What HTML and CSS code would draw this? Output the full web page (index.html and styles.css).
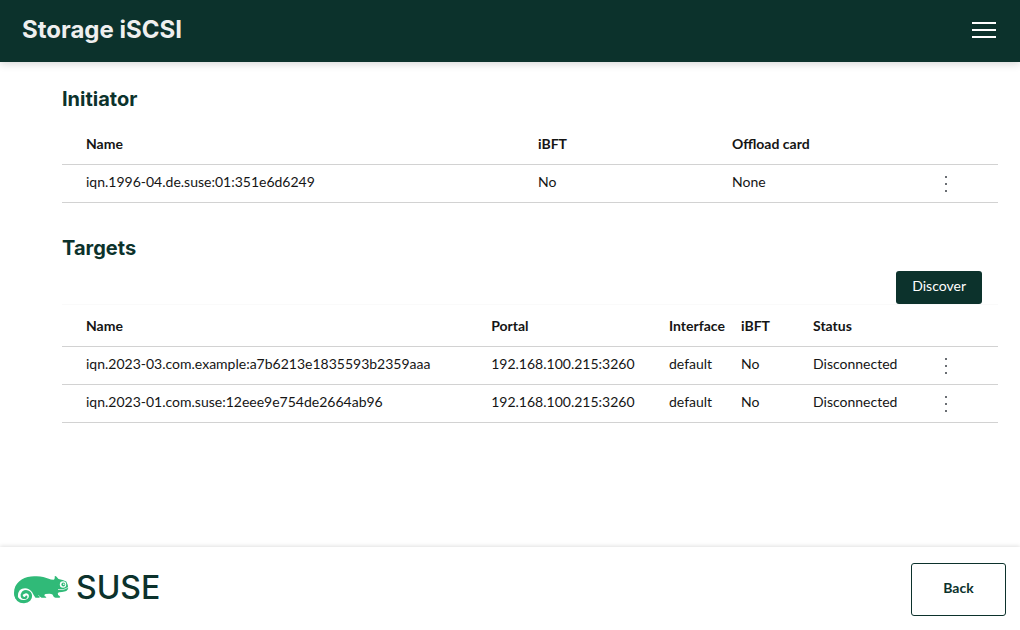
FILE: index.html
```html
<!DOCTYPE html>
<html lang="en">
<head>
<meta charset="utf-8">
<meta name="viewport" content="width=device-width, initial-scale=1">
<title>Storage iSCSI</title>
<link rel="stylesheet" href="styles.css">
</head>
<body class="page">
<header class="header">
  <h1 class="header-title">Storage iSCSI</h1>
  <button class="menu-button" type="button" aria-label="Menu">
    <svg width="24" height="24" viewBox="0 0 24 24" aria-hidden="true"><path fill="currentColor" d="M0 4h24v2H0zM0 11h24v2H0zM0 18h24v2H0z"/></svg>
  </button>
</header>
<main class="main">
  <section class="section">
    <h2 class="section-title">Initiator</h2>
    <table class="table initiator">
      <thead>
        <tr><th class="name">Name</th><th class="ibft">iBFT</th><th>Offload card</th><td class="actions"></td></tr>
      </thead>
      <tbody>
        <tr><td>iqn.1996-04.de.suse:01:351e6d6249</td><td>No</td><td>None</td><td class="actions"><button class="kebab" type="button" aria-label="Actions"><svg width="2" height="16" viewBox="0 0 2 16" aria-hidden="true"><path fill="currentColor" d="M0 0h2v2H0zM0 7h2v2H0zM0 14h2v2H0z"/></svg></button></td></tr>
      </tbody>
    </table>
  </section>
  <section class="section">
    <h2 class="section-title">Targets</h2>
    <div class="toolbar"><button class="discover" type="button">Discover</button></div>
    <table class="table targets">
      <thead>
        <tr><th class="name">Name</th><th class="portal">Portal</th><th class="narrow">Interface</th><th class="narrow">iBFT</th><th>Status</th><td class="actions"></td></tr>
      </thead>
      <tbody>
        <tr><td>iqn.2023-03.com.example:a7b6213e1835593b2359aaa</td><td>192.168.100.215:3260</td><td>default</td><td>No</td><td>Disconnected</td><td class="actions"><button class="kebab" type="button" aria-label="Actions"><svg width="2" height="16" viewBox="0 0 2 16" aria-hidden="true"><path fill="currentColor" d="M0 0h2v2H0zM0 7h2v2H0zM0 14h2v2H0z"/></svg></button></td></tr>
        <tr><td>iqn.2023-01.com.suse:12eee9e754de2664ab96</td><td>192.168.100.215:3260</td><td>default</td><td>No</td><td>Disconnected</td><td class="actions"><button class="kebab" type="button" aria-label="Actions"><svg width="2" height="16" viewBox="0 0 2 16" aria-hidden="true"><path fill="currentColor" d="M0 0h2v2H0zM0 7h2v2H0zM0 14h2v2H0z"/></svg></button></td></tr>
      </tbody>
    </table>
  </section>
</main>
<footer class="footer">
  <div class="brand">
    <svg class="brand-mark" width="56" height="32" viewBox="0 0 56 32" aria-hidden="true">
      <path fill="#30ba78" d="M0 19C0 9 8 3.500 17 2.500C26 1.500 30 2.800 34 4.500Q37 5.800 39.500 5.800Q41 5.500 40.700 2.300Q41.300 1.400 42.300 2.600L44.500 5Q49 5.600 52.300 7.500Q54.300 11 54.200 14.500Q53.500 17.500 48 18Q44.500 18.200 43.800 19Q43.500 21.500 45.500 21.900Q47 22.800 45.500 23.800H41.500Q39.500 23.500 38.500 20.500Q37 19.500 35 19.700L31.500 20Q30 20.500 30.500 22Q32.500 22.400 32.300 23.800H27.500Q25.500 23 24.500 20.800Q24 22 25.500 22.500Q26.500 23.600 25 23.800H21.500Q19.500 21 18 18C15 13.500 9 13 5.500 16.500Q3.500 19 3.700 23L2 25Q0 22.500 0 19Z"/>
      <path fill="none" stroke="#30ba78" stroke-width="3.200" stroke-linecap="round" d="M1.800 20C2 25 5.500 27.700 10 27.600C14.500 27.500 16.800 24.500 16.500 21.500C16 17.800 11.800 16.700 9.200 18.700"/>
      <path fill="none" stroke="#30ba78" stroke-width="2.200" stroke-linecap="round" d="M9.200 18.700C6.500 20.700 7.600 24 10.500 24Q12.500 23.900 12.300 22.500"/>
      <circle cx="49" cy="10.500" r="3.200" fill="#fff"/>
      <circle cx="49.300" cy="10.500" r="1.900" fill="#30ba78"/>
      <circle cx="49.800" cy="10.200" r=".8" fill="#fff"/>
      <path d="M44 15.500Q49.500 16.700 54 13.500" fill="none" stroke="#fff" stroke-width=".7"/>
    </svg>
    <span class="brand-name">SUSE</span>
  </div>
  <button class="back" type="button">Back</button>
</footer>
</body>
</html>
```
FILE: styles.css
```css
* { box-sizing: border-box; }
.page {
  display: flex;
  flex-direction: column;
  min-height: 100vh;
  margin: 0;
  background: #fff;
  color: #151515;
  font: 14px/21px Lato, "Noto Sans", sans-serif;
}
button { font: inherit; cursor: pointer; }
.header {
  display: flex;
  align-items: center;
  justify-content: space-between;
  padding: 12px 24px 14px 22px;
  background: #0c322c;
  color: #efefef;
  box-shadow: 0 2px 8px rgba(0, 0, 0, .16);
}
.header-title {
  margin: 0;
  font: 700 24px/36px Inter, "Open Sans", sans-serif;
}
.menu-button {
  display: flex;
  padding: 0;
  border: 0;
  background: none;
  color: #fff;
}
.main {
  display: flex;
  flex: 1;
  flex-direction: column;
  gap: 30px;
  padding: 22px 22px 24px 62px;
}
.section-title {
  margin: 0 0 9px;
  color: #0c322c;
  font: 700 20px/30px Inter, "Open Sans", sans-serif;
}
.toolbar {
  display: flex;
  justify-content: flex-end;
  margin-top: -1px;
  padding-right: 16px;
}
.table {
  width: 100%;
  border-collapse: separate;
  border-spacing: 0;
  table-layout: fixed;
}
.table th, .table td {
  padding: 6px 8px 10px;
  border-bottom: 1px solid #d2d2d2;
  text-align: left;
  white-space: nowrap;
}
.table thead th, .table thead td {
  padding-top: 10px;
  padding-bottom: 10px;
  font-weight: 700;
}
.table th:first-child, .table td:first-child { padding-left: 24px; }
.initiator .name { width: 50%; }
.initiator .ibft { width: 194px; }
.targets { border-top: 1px solid #fafafa; }
.targets .name { width: 45%; }
.targets .portal { width: 19%; }
.narrow { width: 72px; }
.table .actions {
  width: 104px;
  padding-top: 8px;
  padding-bottom: 8px;
  text-align: center;
}
.kebab {
  display: inline-flex;
  align-items: center;
  height: 21px;
  padding: 0 8px;
  border: 0;
  background: none;
  color: #6a6e73;
  vertical-align: top;
}
.discover {
  padding: 4px 16px 8px;
  border: 0;
  border-radius: 3px;
  background: #0c322c;
  color: #fff;
}
.footer {
  display: flex;
  align-items: center;
  justify-content: space-between;
  padding: 16px 14px 14px;
  background: #fff;
  box-shadow: 0 -1px 4px rgba(0, 0, 0, .12);
}
.brand {
  display: flex;
  align-items: center;
  gap: 6px;
}
.brand-name {
  padding-bottom: 3px;
  color: #0c322c;
  font: 500 32px/32px Inter, "Open Sans", sans-serif;
}
.back {
  padding: 13px 31px 17px;
  min-width: 95px;
  border: 1px solid #0c322c;
  border-radius: 3px;
  background: #fff;
  color: #0c322c;
  font-weight: 700;
}
```
